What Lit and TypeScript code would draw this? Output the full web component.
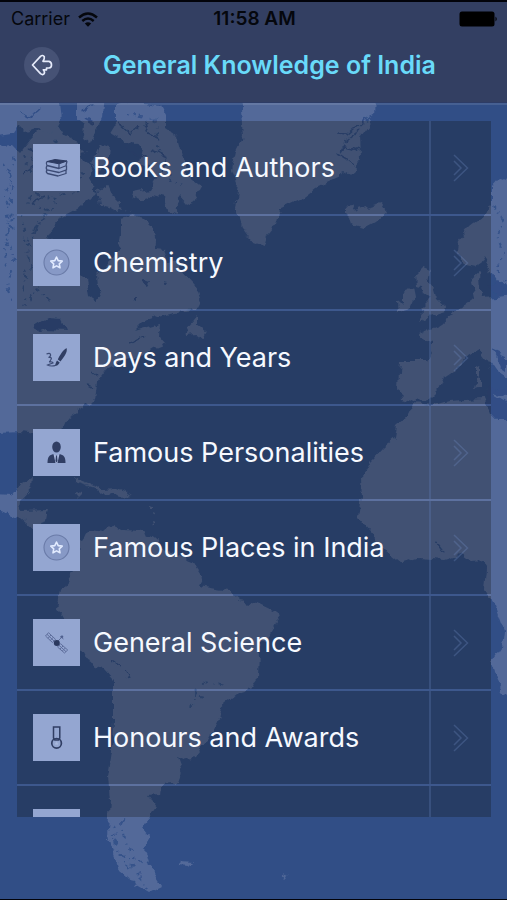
import { LitElement, html, svg, css } from "lit";
import { customElement } from "lit/decorators.js";

const icons: Record<string, unknown> = {
  books: svg`
    <path d="M14 17.5 L22 15.5 L34 17 L26 19.8 Z" fill="#2d3b62" stroke="#2d3b62"/>
    <path d="M14 17.5 Q12.500 19.500 14 21.500 L26 24.500 L33.500 21.500 M26 20 V24.500 M34 17 L33 21.500
             M14 21.500 Q12.500 24 14 25.800 L26 28.500 L33.500 25.800 V21.500 M14 25.800 Q12.500 28 14.500 29.500 L25 32 L33 29.500 V25.800"
      fill="none" stroke="#3c4b75" stroke-width="1.3" stroke-linejoin="round"/>`,
  star: svg`
    <circle cx="23.500" cy="23.500" r="12.500" fill="#8799c6" stroke="#6a7ba8" stroke-width="1.100"/>
    <path d="M23.500 18 L25.200 21.600 L29.200 22.100 L26.300 24.800 L27 28.800 L23.500 26.900 L20 28.800 L20.700 24.800 L17.800 22.100 L21.800 21.600 Z"
      fill="#8a9bc9" stroke="#e2ebff" stroke-width="1.6" stroke-linejoin="round"/>`,
  pen: svg`
    <path d="M33.500 14 C35 18 31 23 27.500 27.500 L24.800 25.500 C27 21 30 16 33.500 14 Z" fill="#303e64"/>
    <path d="M24 26.500 L26.700 28.500 C25.500 31 24 32 21.500 32 C23 30 22.500 28.500 24 26.500 Z" fill="#303e64"/>
    <path d="M13.500 20 Q17 18.500 17.500 20.500 T15.500 23.500 Q19.500 23 18 25.500 T16 28 Q20 27.500 20 29 Q17 30 14.500 31 Q17 32.500 22 31.700"
      fill="none" stroke="#3c4b75" stroke-width="1.2"/>`,
  person: svg`
    <ellipse cx="23.500" cy="18" rx="4.300" ry="5.500" fill="#303e64"/>
    <path d="M14.500 34 C14.500 27.500 16.500 26 20.500 25 L23.500 31 L26.500 25 C30.500 26 32.500 27.500 32.500 34 Z" fill="#303e64"/>
    <path d="M20.500 25 L22.500 34 H24.500 L26.500 25 L24.300 26.500 H22.700 Z" fill="#a9b8dd"/>
    <path d="M23 26.500 H24 L24.500 32 L23.500 33.500 L22.500 32 Z" fill="#303e64"/>`,
  satellite: svg`
    <g fill="none" stroke="#5f6f9d" stroke-width="1">
      <path d="M12.500 17 L15.500 13.700 L22.500 20.300 L19.500 23.500 Z M14 15.300 L21 22 M15 19.300 L18 16 M17.300 21.500 L20.300 18.200"/>
      <path d="M24.500 28 L27.500 24.700 L34.700 31 L31.500 34 Z M26 26.300 L33 32.700 M27 30 L30 27 M29.300 32 L32.300 29"/>
      <path d="M25 22 L28.500 18.500 M27 17.500 L30.500 20"/>
    </g>
    <circle cx="23.800" cy="24" r="3" fill="#2b395f"/>
    <circle cx="29" cy="17.800" r="1.300" fill="#4f608f"/>`,
  medal: svg`
    <g fill="none" stroke="#303e64">
      <path d="M20.500 13 H26.800 V24 L25.500 26 H21.800 L20.500 24 Z" stroke-width="1.5"/>
      <circle cx="23.600" cy="29.300" r="4.800" stroke-width="1.700"/>
      <path d="M23.600 27.200 L24.200 28.700 L25.800 28.800 L24.600 29.800 L25 31.300 L23.600 30.500 L22.200 31.300 L22.600 29.800 L21.400 28.800 L23 28.700 Z" fill="#a9b8dd" stroke="none"/>
    </g>`,
  blank: "",
};

@customElement("world-map")
class WorldMap extends LitElement {
  static styles = css`
    :host { display: block; overflow: hidden; }
    svg { display: block; width: 100%; height: 100%; }
    .land { fill: #526999; }
    .sea { fill: #314e86; }
    .creek { fill: none; stroke: #314e86; stroke-width: 1.5; stroke-linejoin: round; }
    .speckle { fill: none; stroke: #36528a; stroke-width: 2; stroke-dasharray: 3 5 1 4 5 7 2 3; }
    .shoal { fill: none; stroke: #526999; stroke-width: 2; stroke-dasharray: 4 3 2 4; }
  `;
  render() {
    return html`<svg viewBox="0 0 507 900" preserveAspectRatio="xMidYMid slice" aria-hidden="true">
      <defs>
        <filter id="coast" filterUnits="userSpaceOnUse" x="-20" y="-20" width="547" height="940">
          <feTurbulence type="fractalNoise" baseFrequency="0.09" numOctaves="3" seed="7" result="noise"/>
          <feDisplacementMap in="SourceGraphic" in2="noise" scale="10" xChannelSelector="R" yChannelSelector="G"/>
        </filter>
      </defs>
      <g filter="url(#coast)">
      <g class="land">
        <path d="M-20 148 L14 146 20 152 30 139 42 127 58 123 64 136 78 143 84 160 92 166 90 180 98 194
          87 200 81 207 60 218 52 230 48 235 55 244 66 262 80 273 86 279 89 297 95 301 100 292 98 275
          109 264 118 250 121 233 121 219 133 216 145 219 153 227 156 242 155 249 164 250 168 262 178 260
          185 275 194 285 200 302 196 310 175 312 160 316 146 320 134 332 147 328 161 324 160 336 166 343
          154 348 143 355 126 360 108 368 97 383 95 397 86 406 72 415 64 425 60 435 40 435 20 432 -20 434 Z"/>
        <path d="M-20 95 L58 95 61 119 55 130 45 132 38 128 25 131 18 124 12 133 -20 138 Z"/>
        <path d="M76 95 L104 95 102 118 97 128 91 143 83 136 84 124 76 118 Z"/>
        <path d="M116 106 L134 103 160 106 166 118 166 128 176 135 180 150 186 160 186 175 202 187 196 199
          187 203 181 196 174 205 180 216 169 212 164 198 153 195 142 202 132 198 134 192 149 189 156 178
          151 168 139 164 143 148 133 142 120 138 110 132 116 122 Z"/>
        <path d="M98 190 L108 185 112 195 119 202 118 212 109 207 101 205 Z"/>
        <path d="M100 146 L110 149 108 163 98 174 92 165 Z"/>
        <path d="M189 326 L197 316 197 325 207 333 204 339 197 333 185 334 Z"/>
        <path d="M240 95 L374 95 373 119 367 128 360 137 361 160 354 170 334 179 317 187 300 200 279 210
          275 225 267 235 264 247 253 243 242 229 235 209 238 184 232 169 236 151 243 137 Z"/>
        <path d="M345 207 L353 206 356 211 366 208 380 204 385 214 376 222 365 228 351 224 349 217 345 213 Z"/>
        <path d="M414 275 L422 267 429 270 427 281 434 289 437 299 446 307 444 313 428 318 418 322 424 313
          421 308 429 300 423 296 421 286 415 285 Z"/>
        <path d="M404 292 L413 288 415 298 411 308 398 312 397 302 404 301 Z"/>
        <path d="M527 163 L497 183 492 189 492 204 483 217 469 228 460 239 459 254 467 265 476 267 483 256
          489 270 496 282 527 286 Z"/>
        <path d="M471 281 L480 273 481 289 484 298 527 294 527 390 490 366 478 350 467 356 456 369 444 377
          439 390 429 400 416 402 400 398 398 387 400 361 426 361 432 350 432 341 419 334 440 326 452 318
          457 309 469 302 475 298 Z"/>
        <path d="M414 403 L434 405 448 401 484 399 490 412 497 421 527 421 527 716 502 691 494 674 492 663
          502 648 504 632 494 604 485 590 487 567 483 562 472 563 462 555 446 560 418 558 402 563 386 550
          370 532 359 519 362 496 361 480 371 460 383 447 394 438 396 426 408 415 Z"/>
        <path d="M-20 493 L12 495 20 484 33 477 32 488 21 500 20 511 48 510 46 521 37 524 48 536 65 536
          80 543 90 529 104 531 111 525 124 530 143 531 153 537 166 549 180 557 195 563 204 577 200 586
          210 588 229 591 240 600 258 603 275 611 278 622 271 634 259 650 258 678 249 691 235 696 221 707
          217 724 207 742 195 757 183 760 176 757 180 768 183 775 180 783 161 785 160 796 148 797 155 806
          151 817 142 828 151 838 145 848 151 869 162 887 150 893 136 885 119 870 112 849 108 830 110 800
          108 777 112 751 113 719 113 680 103 669 87 661 77 641 66 622 56 608 60 592 73 573 80 549 69 545
          46 542 35 531 20 518 -20 500 Z"/>
        <path d="M74 478 L91 485 102 489 117 488 132 494 121 496 111 493 100 495 93 488 75 482 Z"/>
        <path d="M75 494 L83 495 79 499 Z M180 862 L192 863 188 867 179 866 Z M282 876 L287 878 285 880 Z"/>
        <path d="M150 504 l3 1 0 3 -3 -1z M153 512 l2 1 -1 3z M152 521 l3 1 -2 3z"/>
      </g>
      <g class="sea">
        <path d="M35 325 L46 318 61 319 66 330 48 329 38 331 Z"/>
        <path d="M493 350 L507 356 507 371 501 367 Z"/>
        <path d="M144 280 l6 2 -3 5 -5-3z M134 297 l3 0 0 4 -3-1z M164 282 l4 1-2 3z M488 286 l9-5 9 8-9 7z"/>
        <path d="M527 372 L496 391 488 387 485 400 491 415 497 421 527 421 Z"/>
      </g>
      <g class="land"><path d="M476 366 l4 2 0 8-4-1z M478 377 l3 1 0 8-5 2z M492 393 l22 5 0 9z"/></g>
      <g class="creek">
        <path d="M374 117 L362 122 347 135 336 134 M360 130 L343 143 M360 150 L346 145 341 153 M354 166 L345 158 337 153"/>
        <path d="M28 148 L39 152 47 145 M46 162 L59 167 73 160 M22 174 L35 164 42 172 M49 188 L62 179 76 184 M30 204 L45 197"/>
        <path d="M119 122 L130 132 139 124 M145 123 L150 135 162 140 M151 150 L168 158 162 170 M128 148 L138 158 148 155"/>
        <path d="M128 344 L143 336 M112 660 L120 666 M125 671 L129 679 M436 540 L445 552"/>
        <path d="M90 370 L97 376 M87 386 L94 388 M83 111 L93 106 M85 119 L94 124 M19 113 L29 119 38 112"/>
      </g>
      <g class="speckle">
        <path d="M3 162 L11 180 4 199 12 217 6 238 14 258 8 285 13 303 M15 157 L9 170 14 190 7 210 12 233 3 250 10 274"/>
        <path d="M24 156 L38 185 25 203 50 210 31 232 43 254 25 272 39 290 22 309 M56 140 L50 166 70 174 60 196 80 192"/>
        <path d="M31 158 L45 176 36 194 58 200 40 222 27 244 48 262 33 280 50 300 M66 150 L62 160 82 172 72 188 M22 214 L28 262 23 300"/>
        <path d="M126 114 L154 118 160 151 171 180 181 184 M494 205 L504 220 497 237 505 255 497 267 506 280"/>
        <path d="M112 826 L117 847 127 865 139 875 148 890 M122 821 L126 845 134 868 M130 850 L143 864"/>
        <path d="M190 706 L198 690 203 681 216 683 229 686 M201 696 L205 697"/>
      </g>
      <path class="shoal" d="M110 820 L109 840 118 863 136 887 M57 158 L70 150 88 152 M118 208 L131 211"/>
      </g>
    </svg>`;
  }
}

@customElement("topic-row")
class TopicRow extends LitElement {
  static properties = { label: {}, icon: {} };
  declare label: string;
  declare icon: string;
  static styles = css`
    :host { display: block; }
    .row {
      display: flex; align-items: stretch; width: 100%; height: 93px; margin: 0; padding: 0;
      border: 0; background: rgba(12, 12, 4, 0.25); color: #f6f9ff; text-align: left;
      font: 400 27px/36px Inter, "Liberation Sans", sans-serif; cursor: pointer;
    }
    .main { flex: 1; min-width: 0; display: flex; align-items: center; gap: 13px; padding-left: 16px; }
    .tile { flex: none; width: 47px; height: 47px; background: #94a6d1; }
    .text { white-space: nowrap; }
    .go {
      flex: none; width: 62px; display: flex; align-items: center; justify-content: center;
      border-left: 2px solid rgba(100, 130, 190, 0.28); box-sizing: border-box;
    }
    .tile svg, .go svg { display: block; }
  `;
  render() {
    return html`<button class="row" type="button">
      <span class="main">
        <span class="tile"><svg width="47" height="47" viewBox="0 0 47 47" aria-hidden="true">${icons[this.icon]}</svg></span>
        <span class="text">${this.label}</span>
      </span>
      <span class="go"><svg width="16" height="28" viewBox="0 0 16 28" fill="none" stroke="#7895cc" stroke-opacity=".28" stroke-width="1.500" aria-hidden="true">
        <path d="M1 1 L14.500 14 L1 27 M1 7 L8 14 L1 21"/></svg></span>
    </button>`;
  }
}

@customElement("app-root")
class AppRoot extends LitElement {
  static styles = css`
    :host {
      display: flex; flex-direction: column; position: relative; height: 100vh; box-sizing: border-box;
      border-top: 2px solid #02030a; border-bottom: 1px solid #02030a; background: #314e86;
      font-family: Inter, "Liberation Sans", sans-serif; overflow: hidden;
    }
    .map { position: absolute; inset: -2px 0 -1px; }
    header { position: relative; background: #333f62; border-bottom: 1px solid #2d3c66; }
    .status {
      display: grid; grid-template-columns: 1fr auto 1fr; align-items: center; height: 34px;
      padding: 0 9px 0 11px; color: #05070d; font-size: 18px; line-height: 24px;
    }
    .carrier { display: flex; align-items: center; gap: 8px; }
    .time { font-size: 19px; font-weight: 600; }
    .battery { justify-self: end; display: block; }
    .bar { display: grid; grid-template-columns: 52px 1fr 28px; align-items: center; height: 58px; padding: 0 8px 8px 16px; }
    .back {
      width: 36px; height: 36px; padding: 0; border: 0; border-radius: 50%; background: #465275;
      justify-self: center; display: grid; place-items: center; cursor: pointer;
    }
    h1 { margin: 0; text-align: center; white-space: nowrap; color: #69daf9; font-size: 25px; line-height: 32px; font-weight: 600; }
    .rule { position: relative; height: 2px; background: rgba(255, 255, 255, 0.1); }
    .list {
      position: relative; flex: 1; min-height: 0; margin: 16px 16px 82px 17px; padding: 0;
      list-style: none; overflow-y: auto; scrollbar-width: none;
      box-sizing: border-box;
    }
    .item { border-bottom: 2px solid rgba(255, 255, 255, 0.06); }
  `;
  private topics = [
    ["Books and Authors", "books"],
    ["Chemistry", "star"],
    ["Days and Years", "pen"],
    ["Famous Personalities", "person"],
    ["Famous Places in India", "star"],
    ["General Science", "satellite"],
    ["Honours and Awards", "medal"],
    ["", "blank"],
  ];
  render() {
    return html`
      <world-map class="map"></world-map>
      <header>
        <div class="status">
          <span class="carrier">Carrier
            <svg width="20" height="15" viewBox="0 0 20 15" aria-hidden="true">
              <g fill="none" stroke="#05070d" stroke-width="2.400"><path d="M1 5.500 Q10 -2.500 19 5.500"/><path d="M4.300 9 Q10 4 15.700 9"/></g>
              <path d="M6.800 11.500 Q10 8.800 13.200 11.500 L10 14.800 Z" fill="#05070d"/>
            </svg>
          </span>
          <span class="time">11:58 AM</span>
          <svg class="battery" width="39" height="16" viewBox="0 0 39 16" aria-hidden="true">
            <rect x="0.500" y="0.500" width="35" height="15" rx="2.500" fill="#000"/><path d="M36.500 5.500 Q39 8 36.500 10.500 Z" fill="#000"/>
          </svg>
        </div>
        <div class="bar">
          <button class="back" type="button" aria-label="Back">
            <svg width="22" height="22" viewBox="0 0 22 22" fill="none" stroke="#e6ebfa" stroke-width="1.700" stroke-linejoin="round" aria-hidden="true">
              <path d="M1.500 11 L9.500 2.300 Q11.800 0.500 13.300 2.800 Q13.700 4.500 12 7.300 H18 Q20.500 7.800 20.500 11 Q20.500 13.700 18 14 H15.500 V15.800 H12.300 Q14 18 13.300 19.500 Q11.800 21.500 9.500 19.700 Z"/>
            </svg>
          </button>
          <h1>General Knowledge of India</h1>
        </div>
      </header>
      <div class="rule"></div>
      <ul class="list">
        ${this.topics.map(([label, icon]) => html`<li class="item"><topic-row .label=${label} .icon=${icon}></topic-row></li>`)}
      </ul>
    `;
  }
}
